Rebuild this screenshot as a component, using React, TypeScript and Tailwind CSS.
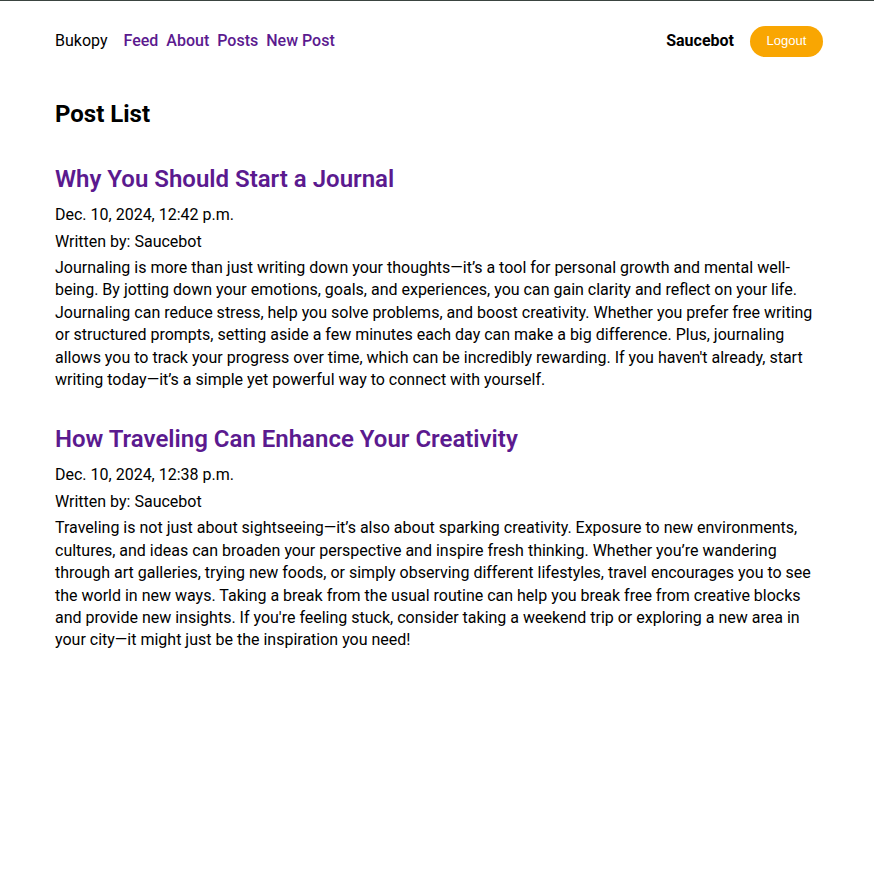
const posts = [
  {
    title: 'Why You Should Start a Journal',
    date: 'Dec. 10, 2024, 12:42 p.m.',
    author: 'Saucebot',
    body: "Journaling is more than just writing down your thoughts\u2014it\u2019s a tool for personal growth and mental well-being. By jotting down your emotions, goals, and experiences, you can gain clarity and reflect on your life. Journaling can reduce stress, help you solve problems, and boost creativity. Whether you prefer free writing or structured prompts, setting aside a few minutes each day can make a big difference. Plus, journaling allows you to track your progress over time, which can be incredibly rewarding. If you haven't already, start writing today\u2014it\u2019s a simple yet powerful way to connect with yourself.",
  },
  {
    title: 'How Traveling Can Enhance Your Creativity',
    date: 'Dec. 10, 2024, 12:38 p.m.',
    author: 'Saucebot',
    body: "Traveling is not just about sightseeing\u2014it\u2019s also about sparking creativity. Exposure to new environments, cultures, and ideas can broaden your perspective and inspire fresh thinking. Whether you\u2019re wandering through art galleries, trying new foods, or simply observing different lifestyles, travel encourages you to see the world in new ways. Taking a break from the usual routine can help you break free from creative blocks and provide new insights. If you're feeling stuck, consider taking a weekend trip or exploring a new area in your city\u2014it might just be the inspiration you need!",
  },
];

export default function App() {
  return (
    <div className="min-h-[872px] bg-white border-t border-[#3a4440] text-black font-['Roboto',sans-serif]">
      <div className="px-[55px] pr-[51px]">
        {/* Nav */}
        <nav className="flex items-center justify-between h-[80px]">
          <div className="flex items-center text-base">
            <span className="mr-4">Bukopy</span>
            <div className="flex gap-2 font-medium text-[#5b1a8f]">
              <a href="#">Feed</a>
              <a href="#">About</a>
              <a href="#">Posts</a>
              <a href="#">New Post</a>
            </div>
          </div>
          <div className="flex items-center gap-4">
            <span className="font-bold">Saucebot</span>
            <button className="h-[31px] w-[73px] rounded-full bg-[#f9a602] text-white text-[13px] font-['Liberation_Sans',Arial,sans-serif]">
              Logout
            </button>
          </div>
        </nav>

        {/* Content */}
        <h1 className="mt-[18px] text-2xl font-bold leading-[30px]">Post List</h1>

        <div className="mt-[35px] flex flex-col gap-[33px]">
          {posts.map((post) => (
            <article key={post.title}>
              <h2 className="text-2xl font-semibold leading-[30px] text-[#5b1a8f]">
                {post.title}
              </h2>
              <p className="mt-[10px] leading-[22px]">{post.date}</p>
              <p className="mt-[5px] leading-[22px]">Written by: {post.author}</p>
              <p className="mt-[4px] leading-[22.4px] pr-[2px]">{post.body}</p>
            </article>
          ))}
        </div>
      </div>
    </div>
  );
}
